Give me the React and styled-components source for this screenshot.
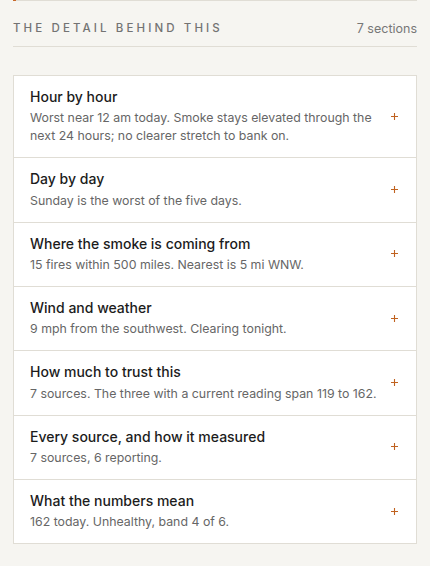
import React from "react";
import styled, { createGlobalStyle } from "styled-components";

const Global = createGlobalStyle`
  html, body { margin: 0; padding: 0; background: #f6f5f1; }
  body { font-family: Inter, "Noto Sans", sans-serif; -webkit-font-smoothing: antialiased; }
`;

const Page = styled.div`
  padding: 0 13px 22px;
`;

const Progress = styled.div`
  height: 1px;
  background: #e0ddd5;
  display: flex;
`;

const ProgressFill = styled.div`
  height: 100%;
  background: #c8692a;
`;

const Header = styled.div`
  display: flex;
  justify-content: space-between;
  align-items: center;
  height: 46px;
  border-bottom: 1px solid #e0ddd5;
  box-sizing: border-box;
`;

const Eyebrow = styled.span`
  font-size: 11.5px;
  letter-spacing: 0.27em;
  text-transform: uppercase;
  color: #737373;
  font-weight: 500;
  margin-top: 9px;
`;

const Count = styled.span`
  font-size: 12.5px;
  color: #777;
  margin-top: 9px;
`;

const Card = styled.div`
  margin-top: 28px;
  background: #fff;
  border: 1px solid #e0ddd5;
`;

const Row = styled.div`
  display: flex;
  align-items: center;
  gap: 10px;
  padding: 11px 18px 12px 16px;
  border-top: ${(p) => (p.$first ? "none" : "1px solid #e0ddd5")};
  cursor: pointer;
`;

const Text = styled.div`
  flex: 1;
  min-width: 0;
`;

const Title = styled.div`
  font-size: 14px;
  line-height: 20.33px;
  font-weight: 500;
  color: #1c1c1c;
`;

const Summary = styled.div`
  margin-top: 2px;
  font-size: 12.35px;
  line-height: 18px;
  color: #666;
`;

const PlusIcon = styled.svg`
  flex: none;
  display: block;
  width: 7px;
  height: 7px;
`;

const Plus = () => (
  <PlusIcon viewBox="0 0 7 7" aria-hidden="true">
    <path d="M3.5 0V7M0 3.5H7" stroke="#c0621f" strokeWidth="1.1" fill="none" />
  </PlusIcon>
);

const sections = [
  ["Hour by hour", "Worst near 12 am today. Smoke stays elevated through the next 24 hours; no clearer stretch to bank on."],
  ["Day by day", "Sunday is the worst of the five days."],
  ["Where the smoke is coming from", "15 fires within 500 miles. Nearest is 5 mi WNW."],
  ["Wind and weather", "9 mph from the southwest. Clearing tonight."],
  ["How much to trust this", "7 sources. The three with a current reading span 119 to 162."],
  ["Every source, and how it measured", "7 sources, 6 reporting."],
  ["What the numbers mean", "162 today. Unhealthy, band 4 of 6."],
];

export default function App() {
  return (
    <Page>
      <Global />
      <Progress>
        <ProgressFill style={{ width: "3px" }} />
      </Progress>
      <Header>
        <Eyebrow>The detail behind this</Eyebrow>
        <Count>7 sections</Count>
      </Header>
      <Card>
        {sections.map(([t, s], i) => (
          <Row key={t} $first={i === 0}>
            <Text>
              <Title>{t}</Title>
              <Summary>{s}</Summary>
            </Text>
            <Plus />
          </Row>
        ))}
      </Card>
    </Page>
  );
}
